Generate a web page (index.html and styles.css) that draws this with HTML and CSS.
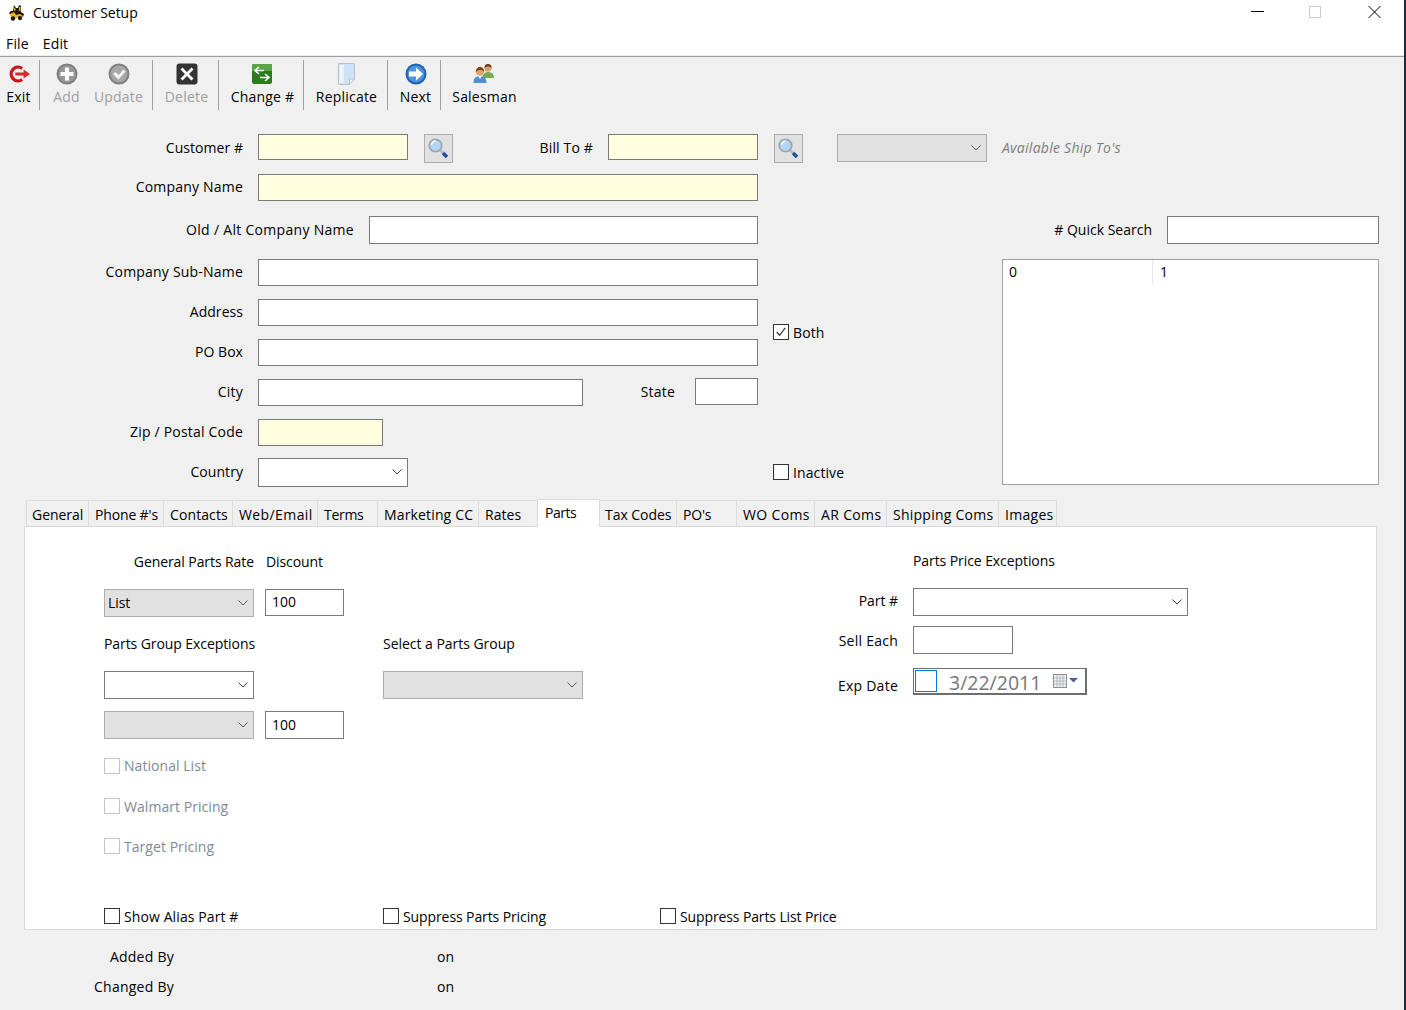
FILE: index.html
```html
<!DOCTYPE html>
<html lang="en">
<head>
<meta charset="utf-8">
<title>Customer Setup</title>
<link rel="stylesheet" href="styles.css">
</head>
<body>
<div class="window">
  <header class="titlebar">
    <svg class="app-icon" width="16" height="16" viewBox="0 0 16 16"><path d="M5 0 7 3h2l1-3 2 1v6l3 2-1 3-4-1-3 2-4-1L0 8l2-2h2Z" fill="#1f1a0c"/><path d="M1 9l4-2 2 3 4-1 3 2-1 2-4-1-4 2-3-1ZM5 2l2 3-2 1ZM10 2h1.500v4H10Z" fill="#f0b428"/><circle cx="4" cy="13.500" r="2.200" fill="#1a1608"/><circle cx="11" cy="13" r="2.200" fill="#2a2210"/></svg>
    <span class="title-text">Customer Setup</span>
    <div class="winctl">
      <span class="winbtn"><svg width="14" height="14" viewBox="0 0 14 14"><path d="M0 5.500h13" stroke="#000"/></svg></span>
      <span class="winbtn"><svg width="14" height="14" viewBox="0 0 14 14"><rect x="0.500" y="0.500" width="11" height="11" fill="none" stroke="#ccc"/></svg></span>
      <span class="winbtn"><svg width="14" height="14" viewBox="0 0 14 14"><path d="M1.500 0 13.500 12M13.500 0 1.500 12" stroke="#000" fill="none"/></svg></span>
    </div>
  </header>
  <nav class="menubar"><span>File</span><span>Edit</span></nav>

  <div class="toolbar">
    <div class="tb-group g-exit">
      <div class="tb-btn"><svg class="tb-icon" viewBox="0 0 24 22"><path d="M15.500 5A7.500 7.500 0 1 0 15.500 17" fill="none" stroke="#c8161c" stroke-width="3.600"/><path d="M8 9.300h9V6l7 5-7 5v-3.300H8Z" fill="#d42a2a"/></svg><span>Exit</span></div>
    </div>
    <div class="tb-group g-edit">
      <div class="tb-btn off"><svg class="tb-icon" viewBox="0 0 22 22"><circle cx="11" cy="11" r="10.500" fill="#7f7f7f"/><circle cx="11" cy="11" r="8.500" fill="#999"/><path d="M9 4.500h4V9h4.500v4H13v4.500H9V13H4.500V9H9Z" fill="#fff"/></svg><span>Add</span></div>
      <div class="tb-btn off"><svg class="tb-icon" viewBox="0 0 22 22"><circle cx="11" cy="11" r="10.500" fill="#7f7f7f"/><circle cx="11" cy="11" r="8.500" fill="#a8a8a8"/><path d="M5 11l2.500-2 3 3 5-5.500 2 2-7 8Z" fill="#f2f2f2"/></svg><span>Update</span></div>
    </div>
    <div class="tb-group g-del">
      <div class="tb-btn off"><svg class="tb-icon" viewBox="0 0 22 22"><rect x="0.500" y="0.500" width="21" height="21" rx="3" fill="#333"/><path d="M6.500 4.500 11 9l4.500-4.500 2 2L13 11l4.500 4.500-2 2L11 13l-4.500 4.500-2-2L9 11 4.500 6.500Z" fill="#fff"/></svg><span>Delete</span></div>
    </div>
    <div class="tb-group g-chg">
      <div class="tb-btn"><svg class="tb-icon" viewBox="0 0 22 22"><rect x="1" y="1" width="20" height="20" rx="2" fill="#2a7a1e"/><rect x="1" y="1" width="20" height="7" fill="#5aa548"/><path d="M8 4 4 7.500 8 11M4.500 7.500H13M14 11l4 3.500-4 3.500M17.500 14.500H9" stroke="#fff" stroke-width="1.600" fill="none"/></svg><span>Change #</span></div>
    </div>
    <div class="tb-group g-rep">
      <div class="tb-btn"><svg class="tb-icon" viewBox="0 0 22 22"><path d="M2.500 0.500h15a1 1 0 0 1 1 1V16l-5 5.500H3.500a1 1 0 0 1-1-1Z" fill="#cfe3f7" stroke="#b4c2d0"/><path d="M13.500 21.500V16h5Z" fill="#f2f8ff" stroke="#b4c2d0"/><path d="M3.500 2h4v18h-4Z" fill="#eef5fc"/></svg><span>Replicate</span></div>
    </div>
    <div class="tb-group g-next">
      <div class="tb-btn"><svg class="tb-icon" viewBox="0 0 22 22"><circle cx="11" cy="11" r="10.500" fill="#1e63b0"/><circle cx="11" cy="11" r="8.500" fill="#4c94dc"/><path d="M4 8.500h7V4.500l7 6.500-7 6.500v-4H4Z" fill="#fff"/></svg><span>Next</span></div>
    </div>
    <div class="tb-group g-sales">
      <div class="tb-btn"><svg class="tb-icon" viewBox="0 0 22 22"><path d="M9.500 15c0-4 2.500-6 5.500-6s6 2 6 6Z" fill="#76ab52"/><circle cx="15" cy="5" r="3.700" fill="#d8a070"/><path d="M11.500 5a3.500 4 0 0 1 7 0c-2-2-5-2-7 0Z" fill="#6b3a18"/><path d="M0.500 20c0-5 2.500-7 6.500-7s6.500 2 6.500 7Z" fill="#4d8fd6"/><path d="M5 13l2 3 2-3Z" fill="#fff"/><circle cx="7" cy="8.500" r="4.200" fill="#e0a468"/><path d="M2.800 9a4.200 5 0 0 1 8.400 0c-1-2.500-6-3-8.400 0Z" fill="#7a4218"/></svg><span>Salesman</span></div>
    </div>
  </div>

  <section class="form-top">
    <label class="lbl w243">Customer #</label>
    <input class="field req w150" type="text">
    <button class="search" type="button"><svg width="21" height="21" viewBox="0 0 21 21"><path d="M11.500 11.500 15 15" stroke="#b8c0c8" stroke-width="3"/><path d="M15 15 19 19" stroke="#1c4f9e" stroke-width="3.400"/><circle cx="7.500" cy="7.500" r="6.200" fill="#b4d6f2" stroke="#9aa6b2" stroke-width="1.800"/><path d="M3.500 7a4 4 0 0 1 4-4" stroke="#fff" stroke-width="1.500" fill="none"/></svg></button>
    <label class="lbl bill">Bill To #</label>
    <input class="field req w150" type="text">
    <button class="search" type="button"><svg width="21" height="21" viewBox="0 0 21 21"><path d="M11.500 11.500 15 15" stroke="#b8c0c8" stroke-width="3"/><path d="M15 15 19 19" stroke="#1c4f9e" stroke-width="3.400"/><circle cx="7.500" cy="7.500" r="6.200" fill="#b4d6f2" stroke="#9aa6b2" stroke-width="1.800"/><path d="M3.500 7a4 4 0 0 1 4-4" stroke="#fff" stroke-width="1.500" fill="none"/></svg></button>
    <div class="select off ship"><svg class="chev" width="10" height="6" viewBox="0 0 10 6"><path d="M0.500 0.500 5 5 9.500 0.500" fill="none" stroke="#555"/></svg></div>
    <span class="hint">Available Ship To's</span>
  </section>

  <section class="form-body">
    <div class="form-left">
      <label class="lbl r1">Company Name</label>
      <input class="field req r1 wide" type="text">

      <div class="alt r2">
        <label class="lbl">Old / Alt Company Name</label>
        <input class="field alt-input" type="text">
      </div>

      <label class="lbl r3">Company Sub-Name</label>
      <input class="field r3 wide" type="text">

      <label class="lbl r4 tight">Address</label>
      <input class="field r4 wide" type="text">

      <label class="lbl r5 tight">PO Box</label>
      <input class="field r5 wide" type="text">

      <div class="check both"><span class="box"><svg width="14" height="14" viewBox="0 0 15 15"><path d="M3 7.500 6 11l6-8" fill="none" stroke="#333" stroke-width="1.300"/></svg></span>Both</div>

      <label class="lbl r6">City</label>
      <div class="city r6">
        <input class="field city-input" type="text">
        <label class="lbl state-lbl">State</label>
        <input class="field state-input" type="text">
      </div>

      <label class="lbl r7">Zip / Postal Code</label>
      <input class="field req zip r7" type="text">

      <label class="lbl r8 tight">Country</label>
      <div class="select country r8"><svg class="chev" width="10" height="6" viewBox="0 0 10 6"><path d="M0.500 0.500 5 5 9.500 0.500" fill="none" stroke="#444"/></svg></div>

      <div class="check inactive"><span class="box"></span>Inactive</div>
    </div>

    <div class="form-right">
      <div class="quick">
        <label class="lbl">&#35; Quick Search</label>
        <input class="field quick-input" type="text">
      </div>
      <div class="list">
        <div class="list-head"><span class="col-0">0</span><span class="col-1">1</span></div>
      </div>
    </div>
  </section>

  <nav class="tabs">
    <span class="tab t-general">General</span>
    <span class="tab t-phone">Phone #'s</span>
    <span class="tab t-contacts">Contacts</span>
    <span class="tab t-web">Web/Email</span>
    <span class="tab t-terms">Terms</span>
    <span class="tab t-mkt">Marketing CC</span>
    <span class="tab t-rates">Rates</span>
    <span class="tab active t-parts">Parts</span>
    <span class="tab t-tax">Tax Codes</span>
    <span class="tab t-po">PO's</span>
    <span class="tab t-wo">WO Coms</span>
    <span class="tab t-ar">AR Coms</span>
    <span class="tab t-ship">Shipping Coms</span>
    <span class="tab t-images">Images</span>
  </nav>

  <section class="panel">
    <div class="panel-main">
      <div class="parts-left">
        <div class="rate-head"><span>General Parts Rate</span></div>
        <span class="disc-head">Discount</span>
        <span class="cell-gap"></span>
        <span class="cell-gap"></span>

        <div class="select off c1">List<svg class="chev" width="10" height="6" viewBox="0 0 10 6"><path d="M0.500 0.500 5 5 9.500 0.500" fill="none" stroke="#555"/></svg></div>
        <input class="field num" type="text" value="100">
        <span class="cell-gap"></span>
        <span class="cell-gap"></span>

        <span class="group-title">Parts Group Exceptions</span>
        <span class="group-title pick">Select a Parts Group</span>

        <div class="select c1"><svg class="chev" width="10" height="6" viewBox="0 0 10 6"><path d="M0.500 0.500 5 5 9.500 0.500" fill="none" stroke="#444"/></svg></div>
        <span class="cell-gap"></span>
        <span class="cell-gap"></span>
        <div class="select off pick-sel"><svg class="chev" width="10" height="6" viewBox="0 0 10 6"><path d="M0.500 0.500 5 5 9.500 0.500" fill="none" stroke="#555"/></svg></div>

        <div class="select off c1"><svg class="chev" width="10" height="6" viewBox="0 0 10 6"><path d="M0.500 0.500 5 5 9.500 0.500" fill="none" stroke="#555"/></svg></div>
        <input class="field num num2" type="text" value="100">
        <span class="cell-gap"></span>
        <span class="cell-gap"></span>

        <div class="check off full"><span class="box"></span>National List</div>
        <div class="check off full"><span class="box"></span>Walmart Pricing</div>
        <div class="check off full"><span class="box"></span>Target Pricing</div>
      </div>

      <div class="parts-right">
        <span class="pe-title">Parts Price Exceptions</span>
        <label class="lbl part-lbl">Part #</label>
        <div class="select part"><svg class="chev" width="10" height="6" viewBox="0 0 10 6"><path d="M0.500 0.500 5 5 9.500 0.500" fill="none" stroke="#444"/></svg></div>
        <label class="lbl wide-lbl">Sell Each</label>
        <input class="field sell" type="text">
        <label class="lbl wide-lbl exp">Exp Date</label>
        <div class="date">
          <span class="date-check"></span>
          <span class="date-text">3/22/2011</span>
          <svg class="cal" width="26" height="16" viewBox="0 0 26 16"><rect x="0.500" y="1.500" width="13" height="13" fill="#eef0f4" stroke="#8a8f98"/><path d="M0.500 5h13M0.500 8h13M0.500 11h13M4 2v12M7 2v12M10 2v12" stroke="#aab0b8" stroke-width="0.800"/><path d="M16 5h9l-4.500 4.500Z" fill="#4a6385"/></svg>
        </div>
      </div>
    </div>

    <div class="panel-foot">
      <div class="check f-alias"><span class="box"></span>Show Alias Part #</div>
      <div class="check f-price"><span class="box"></span>Suppress Parts Pricing</div>
      <div class="check"><span class="box"></span>Suppress Parts List Price</div>
    </div>
  </section>

  <footer class="audit">
    <span class="audit-lbl">Added By</span><span>on</span>
    <span class="audit-lbl">Changed By</span><span>on</span>
  </footer>
</div>
</body>
</html>
```
FILE: styles.css
```css
* { box-sizing: border-box; }
html, body { margin: 0; padding: 0; }
body {
  font-family: "Open Sans", "Noto Sans", sans-serif;
  font-size: 14px;
  letter-spacing: 0.15px;
  color: #000;
  background: #f0f0f0;
}
.window {
  width: 1406px;
  height: 1010px;
  overflow: hidden;
  border-right: 2px solid #1d2b38;
}

/* title + menu */
.titlebar {
  height: 27px;
  background: #fff;
  display: flex;
  align-items: center;
}
.app-icon { margin-left: 9px; margin-right: 8px; margin-bottom: 2px; flex: none; }
.title-text { line-height: 26px; padding-bottom: 2px; letter-spacing: -0.050px; }
.winctl { margin-left: auto; margin-right: 1px; padding-bottom: 2px; display: flex; }
.winbtn { width: 58px; height: 25px; display: flex; align-items: center; justify-content: center; }
.menubar {
  height: 28px;
  background: #fff;
  padding-left: 6px;
  display: flex;
  gap: 14px;
  align-items: center;
  padding-top: 4px;
}
.toolbar {
  border-top: 1px solid #a0a0a0;
  margin-top: 1px;
  box-shadow: 0 -1px 0 #ececec;
  padding-top: 3px;
  height: 54px;
  display: grid;
  grid-template-columns: 40px 113px 66px 85px 84px 53px 86px;
  letter-spacing: 0.200px;
}
.tb-group {
  height: 50px;
  border-right: 1px solid #a0a0a0;
  display: flex;
  justify-content: center;
}
.g-exit { padding-right: 2px; }
.g-edit { padding-right: 7px; }
.g-del { padding-left: 2px; }
.g-chg { padding-left: 3px; }
.g-rep { padding-left: 2px; }
.g-next { padding-left: 3px; }
.g-sales { padding-left: 1px; border-right: 0; }
.tb-btn {
  min-width: 52px;
  display: flex;
  flex-direction: column;
  align-items: center;
  white-space: nowrap;
}
.g-exit .tb-btn { min-width: 0; }
.tb-icon { width: 22px; height: 22px; margin-top: 3px; margin-bottom: 1px; flex: none; }
.tb-btn span { line-height: 22px; }
.tb-btn.off { color: #a0a0a0; }

/* shared controls */
.lbl { text-align: right; white-space: nowrap; }
.field {
  height: 27px;
  border: 1px solid #7a7a7a;
  background: #fff;
  font: inherit;
  padding: 0 6px;
  margin: 0;
  outline: 0;
  border-radius: 0;
}
.field.req { background: #ffffdf; }
.select {
  height: 28px;
  border: 1px solid #7a7a7a;
  background: #fff;
  display: flex;
  align-items: center;
  padding-left: 3px;
}
.select.off { background: #e1e1e1; border-color: #adadad; }
.chev { margin-left: auto; margin-right: 5px; flex: none; }
.check { display: flex; align-items: center; gap: 4px; white-space: nowrap; letter-spacing: 0.100px; }
.box {
  width: 16px;
  height: 16px;
  border: 1px solid #333;
  background: #fff;
  display: flex;
  align-items: center;
  justify-content: center;
  flex: none;
}
.check.off { color: #7f8a94; }
.check.off .box { border-color: #c4c4c4; }

/* top row */
.form-top {
  margin-top: 24px;
  height: 34px;
  display: flex;
  align-items: flex-start;
}
.form-top .lbl, .hint { line-height: 28px; }
.form-top .field { height: 26px; }
.w243 { width: 243px; margin-right: 15px; letter-spacing: 0.050px; }
.w150 { width: 150px; }
.search {
  width: 29px;
  height: 29px;
  margin: 0 0 0 16px;
  padding: 0;
  border: 1px solid #adadad;
  background: #e1e1e1;
  display: flex;
  align-items: center;
  justify-content: center;
}
.bill { width: 140px; margin-right: 15px; }
.ship { width: 150px; margin-left: 34px; margin-right: 15px; }
.hint { color: #7d7d7d; font-style: italic; letter-spacing: 0.270px; }

/* main form */
.form-body { display: flex; }
.form-left {
  width: 1002px;
  display: grid;
  grid-template-columns: 243px 15px 500px 15px 229px;
  grid-template-rows: 39px 45px 40px 40px 40px 40px 40px 40px;
  align-items: center;
}
.form-left .lbl { padding-bottom: 2px; letter-spacing: 0.200px; }
.form-left .lbl.tight { letter-spacing: 0.050px; }
.quick .lbl { padding-bottom: 2px; letter-spacing: 0; }
.form-left > .lbl { grid-column: 1; }
.form-left > .field, .form-left > .select, .form-left > .city { grid-column: 3; }
.r1 { grid-row: 1; }
.r3 { grid-row: 3; }
.r4 { grid-row: 4; }
.r5 { grid-row: 5; }
.r6 { grid-row: 6; }
.r7 { grid-row: 7; }
.r8 { grid-row: 8; }
.wide { width: 500px; }
.alt {
  grid-column: 1 / 4;
  grid-row: 2;
  display: flex;
  align-items: center;
}
.form-left .alt .lbl { width: 354px; margin-right: 15px; padding-bottom: 0; letter-spacing: 0.300px; }
.alt-input { width: 389px; height: 28px; }
.both { grid-column: 5; grid-row: 4 / 6; }
.inactive { grid-column: 5; grid-row: 8; }
.city { display: flex; align-items: center; }
.city-input { width: 325px; }
.form-left .state-lbl { width: 92px; margin-right: 20px; }
.state-input { width: 63px; margin-bottom: 2px; }
.zip { width: 125px; }
.country { width: 150px; height: 29px; }
.form-right { width: 377px; padding-top: 48px; }
.quick { display: flex; align-items: center; height: 28px; }
.quick .lbl { width: 150px; margin-right: 15px; }
.quick-input { width: 212px; height: 28px; }
.list {
  margin-top: 15px;
  height: 226px;
  background: #fff;
  border: 1px solid #a0a0a0;
}
.list-head { display: flex; height: 24px; line-height: 24px; }
.col-0 { width: 150px; padding-left: 6px; border-right: 1px solid #e6e6e6; }
.col-1 { padding-left: 7px; }

/* tabs */
.tabs {
  margin-top: 7px;
  margin-left: 26px;
  height: 28px;
  display: flex;
  align-items: flex-end;
  letter-spacing: 0.050px;
}
.tab {
  height: 27px;
  padding-left: 6px;
  border: 1px solid #dcdcdc;
  border-left: 0;
  border-bottom: 0;
  line-height: 27px;
  white-space: nowrap;
}
.t-general { width: 63px; padding-left: 5px; border-left: 1px solid #dcdcdc; letter-spacing: -0.050px; }
.t-phone { width: 75px; letter-spacing: -0.150px; }
.t-contacts { width: 69px; letter-spacing: 0.100px; }
.t-web { width: 85px; letter-spacing: 0.400px; }
.t-terms { width: 60px; letter-spacing: -0.300px; }
.t-mkt { width: 101px; letter-spacing: 0.150px; }
.t-rates { width: 59px; }
.t-parts { width: 62px; letter-spacing: -0.450px; }
.t-tax { width: 77px; padding-left: 5px; letter-spacing: -0.050px; }
.t-po { width: 60px; letter-spacing: -0.200px; }
.t-wo { width: 78px; letter-spacing: 0.350px; }
.t-ar { width: 72px; letter-spacing: 0.350px; }
.t-ship { width: 112px; letter-spacing: 0.250px; }
.t-images { width: 58px; letter-spacing: 0.300px; }
.tab.active {
  height: 28px;
  line-height: 25px;
  background: #fff;
  padding-left: 7px;
  position: relative;
  z-index: 1;
}

/* panel */
.panel {
  margin-left: 24px;
  width: 1353px;
  height: 404px;
  margin-top: -1px;
  background: #fff;
  border: 1px solid #dcdcdc;
  padding: 14px 0 0 79px;
  letter-spacing: -0.080px;
}
.panel-main { display: flex; }
.parts-left {
  width: 809px;
  display: grid;
  grid-template-columns: 150px 90px 39px 200px;
  grid-template-rows: 41px 41px 41px 41px 40px 41px 40px 40px;
  align-items: center;
}
.rate-head { text-align: right; white-space: nowrap; }
.disc-head { padding-left: 12px; }
.c1 { width: 150px; }
.num { width: 79px; margin-left: 11px; height: 27px; padding: 0 6px 2px; }
.num2 { height: 28px; }
.group-title { white-space: nowrap; grid-column: 1 / 4; }
.group-title.pick { grid-column: 4; letter-spacing: -0.030px; }
.pick-sel { width: 200px; }
.full { grid-column: 1 / 5; }
.check.off { letter-spacing: 0.050px; }
.parts-right {
  display: grid;
  grid-template-columns: 173px auto;
  grid-template-rows: 38px 46px 30px 53px;
  column-gap: 15px;
  margin-left: -188px;
  align-items: center;
  align-content: start;
}
.pe-title { grid-column: 2; white-space: nowrap; }
.part-lbl { padding-bottom: 4px; letter-spacing: -0.050px; }
.wide-lbl { letter-spacing: 0.250px; }
.part { width: 275px; }
.sell { width: 100px; height: 28px; }
.exp { padding-top: 8px; }
.date {
  width: 174px;
  height: 27px;
  border: 1px solid #6e6e6e;
  border-right-width: 2px;
  border-bottom-width: 2px;
  display: flex;
  align-items: center;
  padding-left: 1px;
}
.date-check { width: 22px; height: 22px; border: 1px solid #0078d7; background: #fff; flex: none; }
.date-text { margin-left: 12px; padding-top: 4px; font-size: 19.500px; letter-spacing: 0; color: #777; line-height: 24px; }
.cal { margin-left: 12px; flex: none; }
.panel-foot {
  margin-top: 40px;
  display: flex;
  height: 20px;
  align-items: center;
}
.panel-foot .check { letter-spacing: -0.120px; }
.panel-foot .f-alias { width: 279px; letter-spacing: 0.100px; }
.panel-foot .f-price { width: 277px; letter-spacing: -0.100px; }

/* audit */
.audit {
  margin-top: 11px;
  display: grid;
  grid-template-columns: 174px auto;
  grid-auto-rows: 30px;
  column-gap: 263px;
  align-items: center;
}
.audit-lbl { text-align: right; letter-spacing: 0.250px; }
```
